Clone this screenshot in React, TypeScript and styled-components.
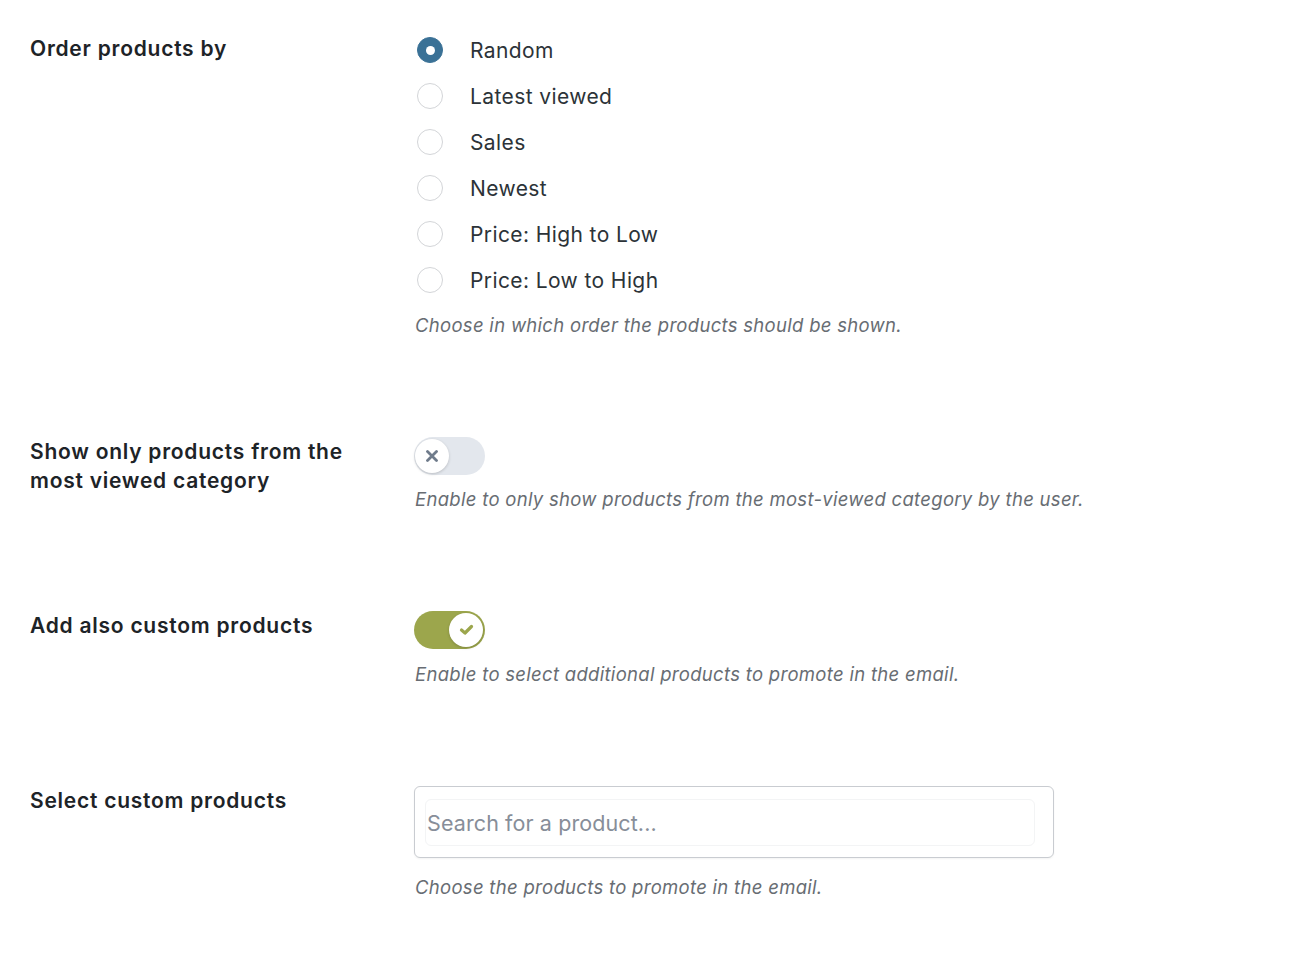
import React, { FC, useState } from "react";
import styled, { createGlobalStyle, css } from "styled-components";

const GlobalStyle = createGlobalStyle`
  html, body {
    margin: 0;
    padding: 0;
    background: #ffffff;
  }
  body {
    font-family: "Inter", "Noto Sans", sans-serif;
    color: #1d2327;
  }
`;

const Page = styled.div`
  padding: 34px 30px 40px 30px;
  display: flex;
  flex-direction: column;
  gap: 100px;
`;

const Row = styled.div`
  display: grid;
  grid-template-columns: 384px 1fr;
  align-items: start;
`;

const Label = styled.div`
  font-size: 21px;
  font-weight: 600;
  line-height: 29px;
  letter-spacing: 0.75px;
  color: #1d2327;
  max-width: 345px;
`;

const Field = styled.div`
  display: flex;
  flex-direction: column;
  align-items: flex-start;
`;

const RadioList = styled.div`
  display: flex;
  flex-direction: column;
  gap: 14px;
`;

const RadioItem = styled.label`
  display: flex;
  align-items: center;
  height: 32px;
  gap: 27px;
  padding-left: 3px;
  cursor: pointer;
  font-size: 21px;
  letter-spacing: 0.4px;
  color: #2c3338;
`;

const RadioDot = styled.span<{ checked: boolean }>`
  box-sizing: border-box;
  width: 26px;
  height: 26px;
  border-radius: 50%;
  border: 1px solid #d3d5d8;
  background: #fff;
  display: flex;
  align-items: center;
  justify-content: center;

  ${(props) =>
    props.checked &&
    css`
      border-color: #3a7196;
      background: #3a7196;
      &::after {
        content: "";
        width: 9px;
        height: 9px;
        border-radius: 50%;
        background: #fff;
      }
    `}
`;

const Description = styled.p<{ space: number }>`
  margin: ${(props) => props.space}px 0 0 1px;
  font-size: 18.5px;
  line-height: 24px;
  letter-spacing: 0.3px;
  font-style: italic;
  color: #686d73;
`;

const ToggleTrack = styled.button<{ on: boolean }>`
  position: relative;
  box-sizing: border-box;
  width: 71px;
  height: 38px;
  border-radius: 19px;
  border: none;
  padding: 0;
  cursor: pointer;
  background: ${(props) => (props.on ? "#9ca64c" : "#e3e7ed")};
`;

const ToggleKnob = styled.span<{ on: boolean }>`
  position: absolute;
  top: 2px;
  left: ${(props) => (props.on ? "35px" : "1px")};
  width: 34px;
  height: 34px;
  border-radius: 50%;
  background: #fff;
  box-shadow: 0 1px 3px rgba(0, 0, 0, 0.18);
  display: flex;
  align-items: center;
  justify-content: center;
`;

const SearchBox = styled.div`
  box-sizing: border-box;
  width: 640px;
  height: 72px;
  border: 1px solid #c9ccd1;
  border-radius: 6px;
  box-shadow: 0 1px 2px rgba(0, 0, 0, 0.05);
  padding: 12px 18px 11px 10px;
  background: #fff;
`;

const SearchInput = styled.input`
  box-sizing: border-box;
  width: 100%;
  height: 100%;
  border: 1px solid #f3f4f5;
  border-radius: 6px;
  padding: 0 1px;
  font-family: "Inter", "Noto Sans", sans-serif;
  font-size: 21.5px;
  letter-spacing: 0.1px;
  color: #1d2327;
  outline: none;
  background: #fff;

  &::placeholder {
    color: #878e99;
  }
`;

const CrossIcon = () => (
  <svg width="12" height="12" viewBox="0 0 12 12">
    <path d="M1.5 1.5 L10.5 10.5 M10.5 1.5 L1.5 10.5" stroke="#6f7b8b" strokeWidth="2.8" strokeLinecap="round" />
  </svg>
);

const CheckIcon = () => (
  <svg width="15" height="12" viewBox="0 0 15 12">
    <path d="M2.5 6 L6 9 L12.5 2.5" fill="none" stroke="#9ca64c" strokeWidth="3.2" strokeLinecap="round" strokeLinejoin="round" />
  </svg>
);

const Toggle: FC<{ on: boolean; onChange: (v: boolean) => void }> = ({ on, onChange }) => (
  <ToggleTrack on={on} onClick={() => onChange(!on)}>
    <ToggleKnob on={on}>{on ? <CheckIcon /> : <CrossIcon />}</ToggleKnob>
  </ToggleTrack>
);

const orderOptions = [
  "Random",
  "Latest viewed",
  "Sales",
  "Newest",
  "Price: High to Low",
  "Price: Low to High",
];

const App: FC = () => {
  const [order, setOrder] = useState("Random");
  const [mostViewed, setMostViewed] = useState(false);
  const [custom, setCustom] = useState(true);

  return (
    <>
      <GlobalStyle />
      <Page>
        <Row>
          <Label>Order products by</Label>
          <Field>
            <RadioList>
              {orderOptions.map((opt) => (
                <RadioItem key={opt} onClick={() => setOrder(opt)}>
                  <RadioDot checked={order === opt} />
                  {opt}
                </RadioItem>
              ))}
            </RadioList>
            <Description space={17}>Choose in which order the products should be shown.</Description>
          </Field>
        </Row>

        <Row>
          <Label>Show only products from the most viewed category</Label>
          <Field>
            <Toggle on={mostViewed} onChange={setMostViewed} />
            <Description space={12}>
              Enable to only show products from the most-viewed category by the user.
            </Description>
          </Field>
        </Row>

        <Row>
          <Label>Add also custom products</Label>
          <Field>
            <Toggle on={custom} onChange={setCustom} />
            <Description space={13}>Enable to select additional products to promote in the email.</Description>
          </Field>
        </Row>

        <Row>
          <Label>Select custom products</Label>
          <Field>
            <SearchBox>
              <SearchInput placeholder="Search for a product..." />
            </SearchBox>
            <Description space={17}>Choose the products to promote in the email.</Description>
          </Field>
        </Row>
      </Page>
    </>
  );
};

export default App;
